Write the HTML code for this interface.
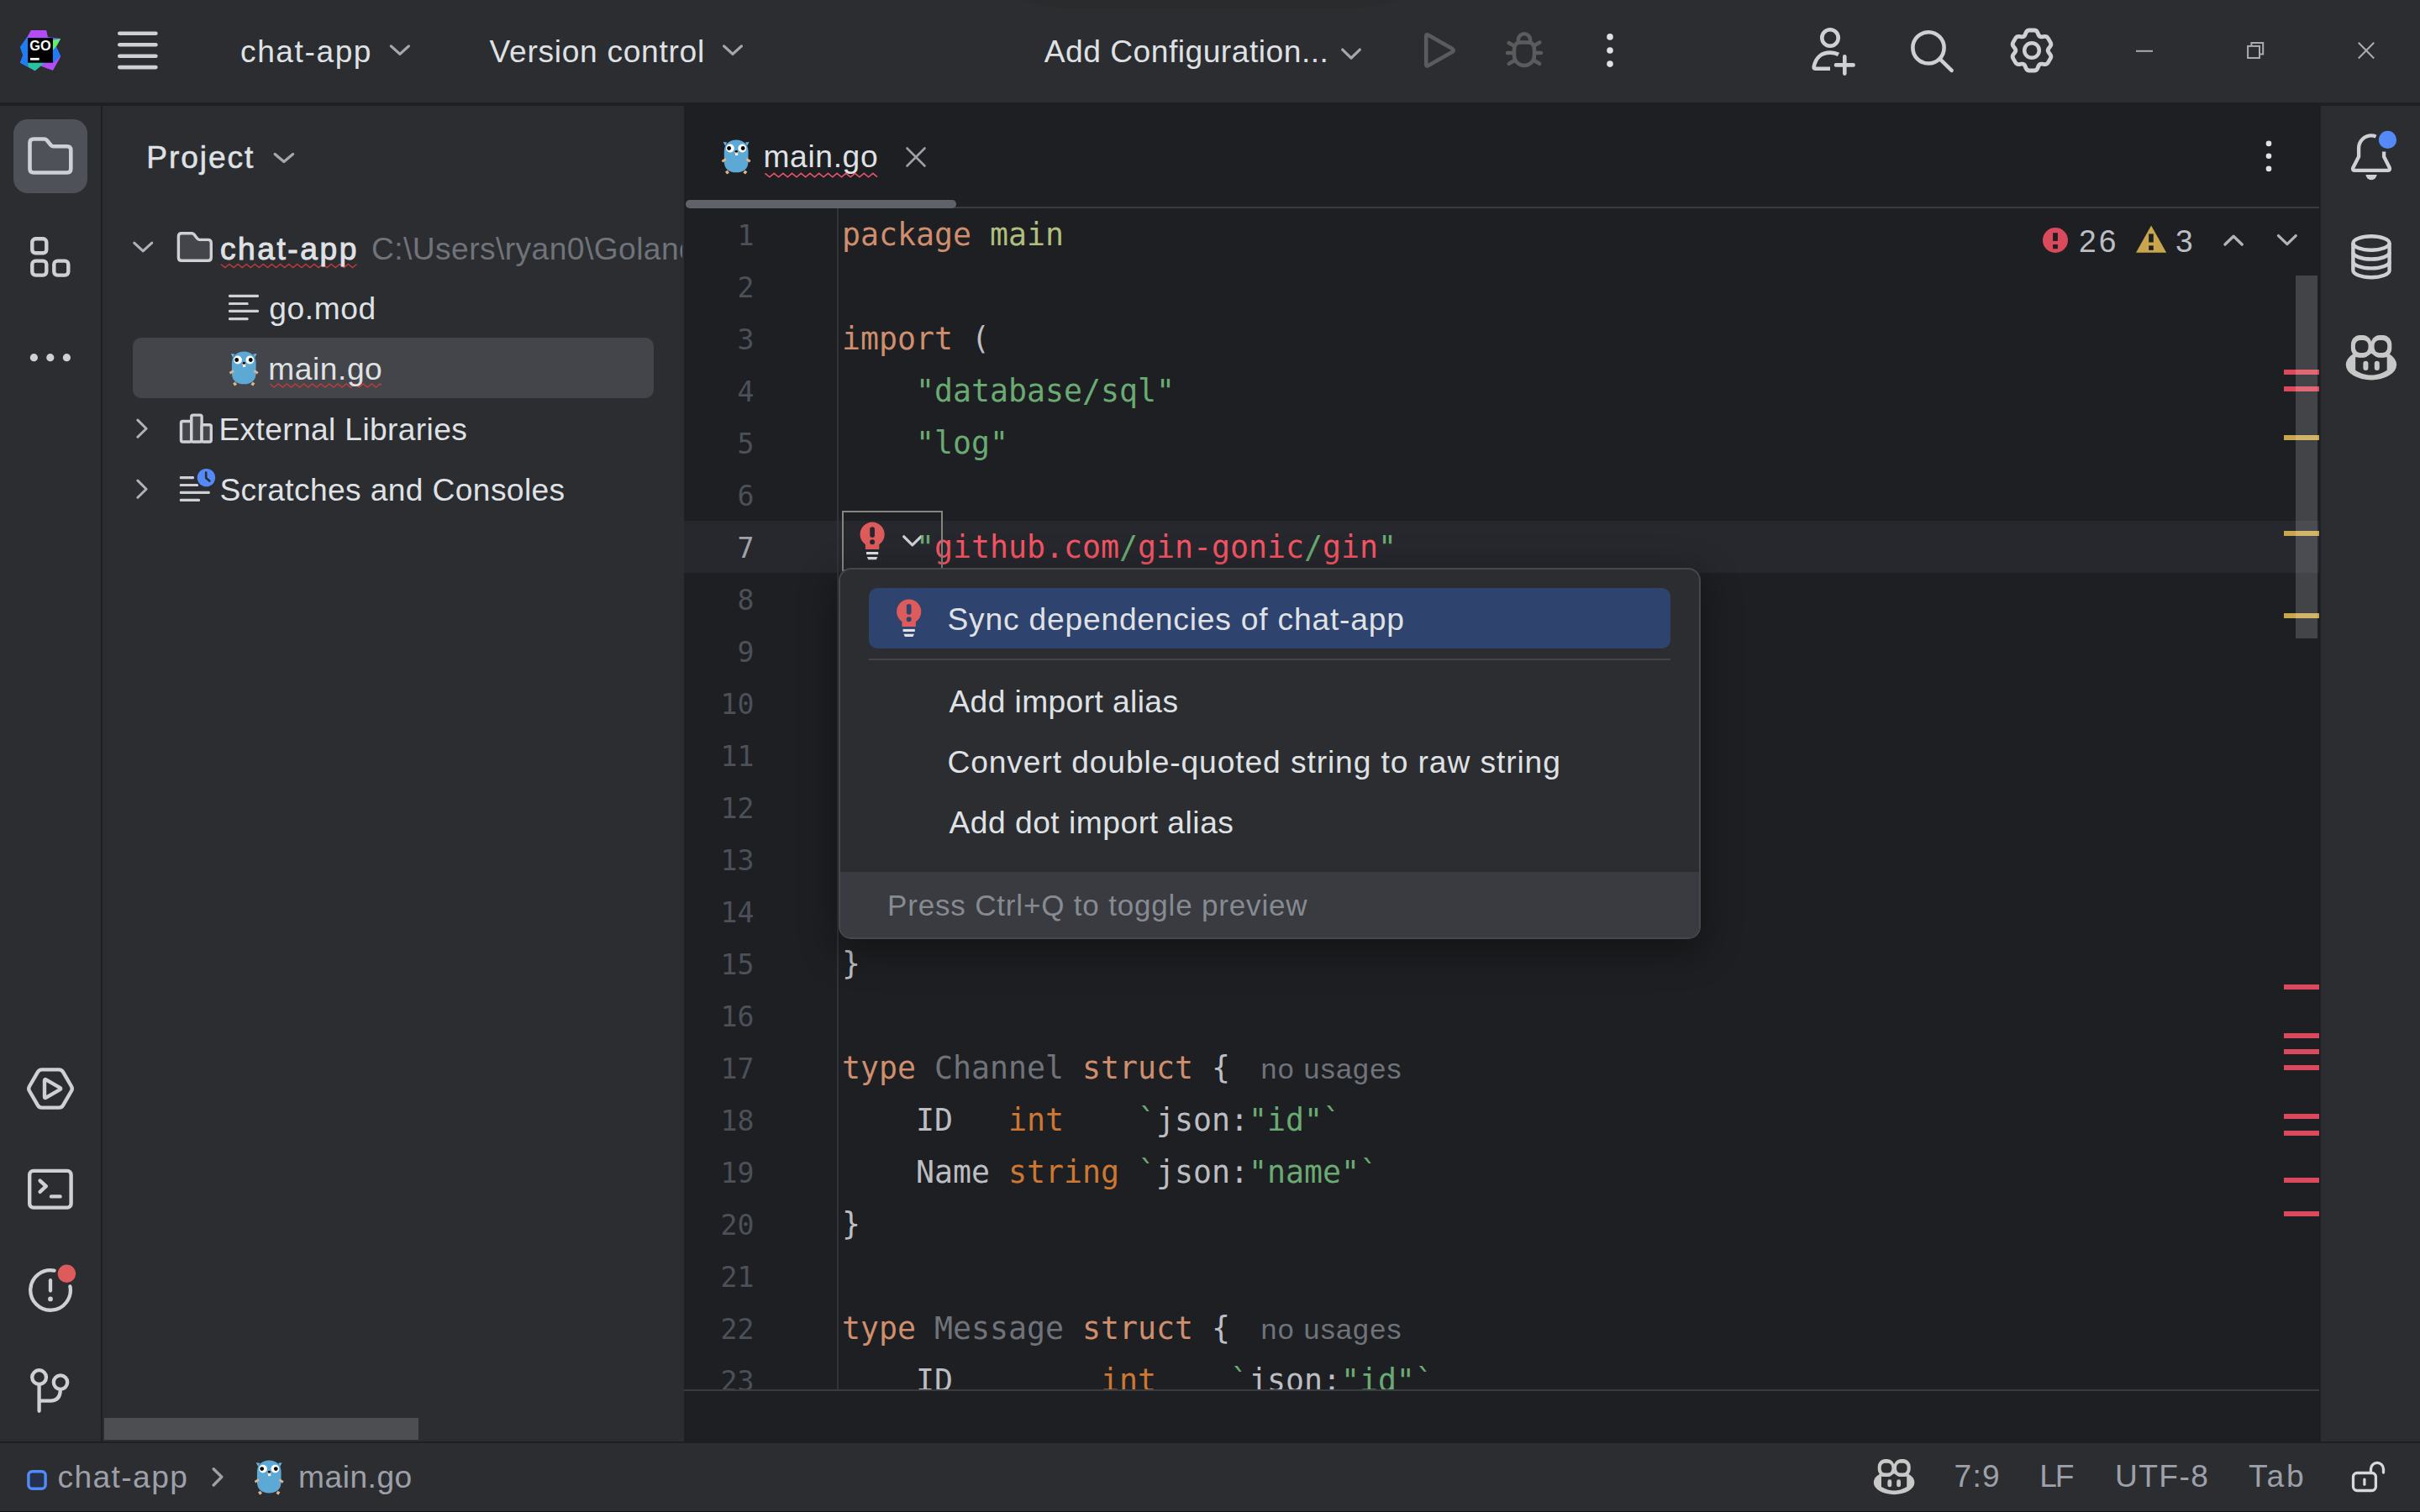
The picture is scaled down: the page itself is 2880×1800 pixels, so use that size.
<!DOCTYPE html>
<html lang="en"><head><meta charset="utf-8"><title>chat-app – main.go</title>
<style>
html,body{margin:0;padding:0;}
body{width:2880px;height:1800px;overflow:hidden;background:#1E1F22;position:relative;font-family:"Liberation Sans", "DejaVu Sans", sans-serif;}
div{box-sizing:border-box;}
.abs{position:absolute;}
#titlebar{position:absolute;left:0;top:0;width:2880px;height:122px;background:#2B2D30;}
#leftstrip{position:absolute;left:0;top:126px;width:120px;height:1590px;background:#2B2D30;}
#sidebar{position:absolute;left:122px;top:126px;width:692px;height:1590px;background:#2B2D30;}
#hscroll{position:absolute;left:124px;top:1688px;width:374px;height:26px;background:#4D4E52;}
#editor{position:absolute;left:814px;top:126px;width:1946px;height:1590px;background:#1E1F22;overflow:hidden;}
#rightstrip{position:absolute;left:2762px;top:126px;width:118px;height:1590px;background:#2B2D30;}
#statusbar{position:absolute;left:0;top:1718px;width:2880px;height:82px;background:#2B2D30;}
#bottomedge{position:absolute;left:0;top:1798.5px;width:2880px;height:1.5px;background:#0d0e0f;}
.t{position:absolute;white-space:nowrap;line-height:44px;font-family:"Liberation Sans", "DejaVu Sans", sans-serif;}
#tabline{position:absolute;left:1130px;top:246px;width:1630px;height:2px;background:#393B40;}
#tabul{position:absolute;left:816px;top:238.3px;width:322px;height:9.7px;background:#5F6269;border-radius:4.8px;}
#gutterline{position:absolute;left:996px;top:248px;width:2px;height:1406px;background:#313438;}
#botline{position:absolute;left:814px;top:1654px;width:1946px;height:2px;background:#393B40;}
#curline{position:absolute;left:814px;top:620px;width:1946px;height:62px;background:#26282E;}
#codeclip{position:absolute;left:814px;top:248px;width:1946px;height:1406px;overflow:hidden;}
.ln{position:absolute;left:0px;width:83.5px;text-align:right;font-family:"DejaVu Sans Mono", "Liberation Mono", monospace;font-size:33.2px;line-height:62px;height:62px;color:#4B5059;white-space:pre;padding-top:1.5px}
.ln.cur{color:#A1A3AB;}
.cl{position:absolute;left:188px;padding-top:1.4px;font-family:"DejaVu Sans Mono", "Liberation Mono", monospace;font-size:36.54px;line-height:62px;height:62px;color:#BCBEC4;white-space:pre;letter-spacing:0.0011px;}
.k{color:#CF8E6D;} .s{color:#6AAB73;} .g{color:#6F737A;} .o{color:#CC7832;} .r{color:#F75464;} .pk{color:#AFBF7E;}
#thumb{position:absolute;left:2732px;top:328px;width:26px;height:431.5px;background:rgba(255,255,255,0.17);}
.mk{position:absolute;left:2718px;width:42px;height:6px;}
#bulbbox{position:absolute;left:1002px;top:608px;width:120px;height:72px;border:2px solid #85867F;}
#popup{position:absolute;left:998px;top:676px;width:1026px;height:442px;background:#2B2D30;border:2px solid #46484D;border-radius:15px;box-shadow:0 12px 44px 6px rgba(0,0,0,0.33);overflow:hidden;}
#popsel{position:absolute;left:1034px;top:700px;width:954px;height:72px;background:#2E436E;border-radius:10px;}
#popsep{position:absolute;left:1034px;top:783.8px;width:954px;height:2px;background:#43454A;}
#popfoot{position:absolute;left:1000px;top:1037.5px;width:1022px;height:78.5px;background:#393B40;border-radius:0 0 13px 13px;}
svg.ov{position:absolute;left:0;top:0;width:2880px;height:1800px;overflow:visible;pointer-events:none;}
</style></head>
<body>
<div id="titlebar"><div style="position:absolute;left:1213px;top:-22px;width:454px;height:32px;border-radius:0 0 60px 60px / 0 0 16px 16px;background:rgba(0,0,0,0.045)"></div></div>
<div id="leftstrip"></div>
<div id="sidebar"></div>
<div id="hscroll"></div>
<div id="editor"></div>
<div id="curline"></div>
<div id="tabline"></div>
<div id="tabul"></div>
<div id="gutterline"></div>
<div id="botline"></div>
<div id="rightstrip"></div>
<div id="statusbar"></div>
<div id="bottomedge"></div>
<svg class="ov" viewBox="0 0 2880 1800">
<g transform="translate(12 24)">
<polygon points="25,12 43,12 44.7,19.9 60.2,22 54.9,31.5 60.2,43 50.9,59.7 36.6,54.6 29.6,60.2 12,50.5 15.3,41.7 12,31.9 20.4,19.9" fill="#7A5CF5"/>
<polygon points="25,12 43,12 45,21 20.4,21" fill="#B44CF5"/>
<polygon points="20.4,19.9 12,31.9 15.3,41.7 12,50.5 21,55 21,21" fill="#1E7CF5"/>
<polygon points="51,23.5 60.2,22 54.9,31.5 51,36" fill="#5CF06C"/>
<polygon points="51,36 54.9,31.5 60.2,43 51,51" fill="#1E7CF5"/>
<polygon points="51,51 60.2,43 50.9,59.7 36.6,54.6 42,50" fill="#B44CF5"/>
<polygon points="19,50 42,50 29.6,60.2 12,50.5" fill="#27C2A0"/>
<polygon points="12,50.5 17,43 21,50 22,56" fill="#1E7CF5"/>
<rect x="21.1" y="21.1" width="29.8" height="29.6" fill="#000"/>
<rect x="24" y="44.9" width="10.7" height="2.8" fill="#fff"/>
</g>
<rect x="140" y="37.4" width="47.7" height="4.6" rx="2.3" fill="#CED0D6"/>
<rect x="140" y="51.0" width="47.7" height="4.6" rx="2.3" fill="#CED0D6"/>
<rect x="140" y="64.4" width="47.7" height="4.6" rx="2.3" fill="#CED0D6"/>
<rect x="140" y="77.8" width="47.7" height="4.6" rx="2.3" fill="#CED0D6"/>
<path d="M465.4 54.9 L475.9 64.4 L486.4 54.9" fill="none" stroke="#A4A7AE" stroke-width="3.3" stroke-linecap="round" stroke-linejoin="round"/>
<path d="M861.6 54.9 L872.0 64.4 L882.4 54.9" fill="none" stroke="#A4A7AE" stroke-width="3.3" stroke-linecap="round" stroke-linejoin="round"/>
<path d="M1597.7 59.1 L1608.0 69.1 L1618.3 59.1" fill="none" stroke="#A4A7AE" stroke-width="3.3" stroke-linecap="round" stroke-linejoin="round"/>
<path d="M1697.2 43.2 L1697.2 76.6 Q1697.2 79.6 1699.9 78.1 L1728.4 61.8 Q1731 60 1728.4 58.1 L1699.9 41.8 Q1697.2 40.2 1697.2 43.2 Z" fill="none" stroke="#5A5B5D" stroke-width="4.6" stroke-linejoin="round"/>
<g fill="none" stroke="#5A5B5D" stroke-width="4.5" stroke-linecap="round">
<path d="M1802 60 Q1802 50.6 1809 50.6 H1819 Q1826 50.6 1826 60 V66 A12 12 0 0 1 1802 66 Z"/>
<path d="M1806.9 50 V47.3 A7.1 7.1 0 0 1 1821.1 47.3 V50"/>
<path d="M1802 54.6 L1795.6 51 M1826 54.2 L1832.4 50.5 M1800 62.9 H1794 M1828 62.9 H1834 M1802.3 72 L1795.8 75.9 M1825.7 72 L1832.2 75.9"/>
</g>
<circle cx="1916" cy="43.9" r="3.8" fill="#DFE1E5"/>
<circle cx="1916" cy="60" r="3.8" fill="#DFE1E5"/>
<circle cx="1916" cy="76.1" r="3.8" fill="#DFE1E5"/>
<g fill="none" stroke="#CED0D6" stroke-width="4.6" stroke-linecap="round">
<circle cx="2178" cy="45" r="9.7"/>
<path d="M2178 81.7 H2160.6 Q2158.4 81.7 2158.7 79.6 C2160.5 69 2167.5 62.6 2178 62.6 C2182 62.6 2185.4 63.5 2188 64.9" stroke-linecap="butt"/>
<path d="M2195.3 67.2 L2195.3 87.6 M2185 77.4 L2205.6 77.4"/>
</g>
<g fill="none" stroke="#CED0D6" stroke-width="4.6" stroke-linecap="round"><circle cx="2295" cy="56.9" r="18.6"/><path d="M2308.8 70.4 L2322.6 83.8"/></g>
<g fill="none" stroke="#CED0D6" stroke-width="4.8" stroke-linejoin="round"><path d="M2411.11 38.76 Q2412.23 35.98 2415.23 35.98 L2420.77 35.98 Q2423.77 35.98 2424.89 38.76 L2425.90 41.27 Q2427.10 44.24 2430.27 43.79 L2432.95 43.42 Q2435.92 43.00 2437.42 45.60 L2440.18 50.39 Q2441.68 52.98 2439.84 55.35 L2438.17 57.48 Q2436.20 60.00 2438.17 62.52 L2439.84 64.65 Q2441.68 67.02 2440.18 69.61 L2437.42 74.40 Q2435.92 77.00 2432.95 76.58 L2430.27 76.21 Q2427.10 75.76 2425.90 78.73 L2424.89 81.24 Q2423.77 84.02 2420.77 84.02 L2415.23 84.02 Q2412.23 84.02 2411.11 81.24 L2410.10 78.73 Q2408.90 75.76 2405.73 76.21 L2403.05 76.58 Q2400.08 77.00 2398.58 74.40 L2395.82 69.61 Q2394.32 67.02 2396.16 64.65 L2397.83 62.52 Q2399.80 60.00 2397.83 57.48 L2396.16 55.35 Q2394.32 52.98 2395.82 50.39 L2398.58 45.60 Q2400.08 43.00 2403.05 43.42 L2405.73 43.79 Q2408.90 44.24 2410.10 41.27 Z"/><circle cx="2418" cy="60" r="8.8" stroke-width="4.5"/></g>
<path d="M2542 60.8 H2562" stroke="#ABACB0" stroke-width="2" fill="none"/>
<g fill="none" stroke="#ABACB0" stroke-width="2"><rect x="2675.1" y="54.9" width="13.9" height="14.1"/><path d="M2679.4 54.9 V51.1 H2693.2 V64.4 H2689"/></g>
<path d="M2806.8 50.8 L2825.2 69.5 M2825.2 50.8 L2806.8 69.5" stroke="#ABACB0" stroke-width="2" fill="none"/>
<rect x="16" y="142" width="88" height="88" rx="17" fill="#4E5157"/>
<path d="M40 165.5 H52.5 Q54.5 165.5 55.8 167 L60.5 172.8 Q61.8 174.3 63.8 174.3 H80 Q84.3 174.3 84.3 178.6 V201 Q84.3 205.5 80 205.5 H40 Q35.5 205.5 35.5 201 V170 Q35.5 165.5 40 165.5 Z" fill="none" stroke="#CED0D6" stroke-width="4.6" stroke-linejoin="round"/>
<rect x="38.3" y="284.3" width="17" height="17" rx="4" fill="none" stroke="#CED0D6" stroke-width="4.4"/>
<rect x="38.3" y="310.6" width="17" height="17" rx="4" fill="none" stroke="#CED0D6" stroke-width="4.4"/>
<rect x="64.3" y="310.6" width="17" height="17" rx="4" fill="none" stroke="#CED0D6" stroke-width="4.4"/>
<circle cx="40.4" cy="425.7" r="4.6" fill="#CED0D6"/>
<circle cx="59.8" cy="425.7" r="4.6" fill="#CED0D6"/>
<circle cx="79.4" cy="425.7" r="4.6" fill="#CED0D6"/>
<g fill="none" stroke="#CED0D6" stroke-width="4.4" stroke-linejoin="round">
<path d="M44.99 1276.16 Q46.60 1273.40 49.80 1273.40 L70.20 1273.40 Q73.40 1273.40 75.01 1276.16 L84.99 1293.24 Q86.60 1296.00 84.99 1298.76 L75.01 1315.84 Q73.40 1318.60 70.20 1318.60 L49.80 1318.60 Q46.60 1318.60 44.99 1315.84 L35.01 1298.76 Q33.40 1296.00 35.01 1293.24 Z"/>
<path d="M53.00 1286.50 Q53.00 1284.30 54.90 1285.40 L71.30 1294.90 Q73.20 1296.00 71.30 1297.10 L54.90 1306.60 Q53.00 1307.70 53.00 1305.50 Z"/></g>
<g fill="none" stroke="#CED0D6" stroke-width="4.4" stroke-linecap="round" stroke-linejoin="round">
<rect x="35.2" y="1393.9" width="49.4" height="43.7" rx="4.5"/>
<path d="M47.6 1405.6 L54.8 1412.2 L47.6 1418.8 M61 1424.4 H71.6"/></g>
<g fill="none" stroke="#CED0D6" stroke-width="4.3" stroke-linecap="round">
<path d="M64.6 1512.6 A23.8 23.8 0 1 0 83.4 1531.4"/>
<path d="M60 1524.2 V1536.6"/></g><circle cx="60" cy="1546.4" r="2.9" fill="#CED0D6"/>
<circle cx="79.4" cy="1516.3" r="10.7" fill="#DE5B5B"/>
<g fill="none" stroke="#CED0D6" stroke-width="4.3" stroke-linecap="round">
<circle cx="46.6" cy="1639.6" r="8.4"/><circle cx="72" cy="1645.6" r="8.2"/>
<path d="M46.6 1648.3 V1679.8 M46.6 1667.6 H60 Q71.8 1667.6 71.8 1654.3"/></g>
<path d="M327.2 183.5 L337.9 192.6 L348.6 183.5" fill="none" stroke="#A4A7AE" stroke-width="3.3" stroke-linecap="round" stroke-linejoin="round"/>
<path d="M159.7 289.2 L170.2 298.9 L180.8 289.2" fill="none" stroke="#B0B3BA" stroke-width="3.0" stroke-linecap="round" stroke-linejoin="round"/>
<path d="M216 277.7 H228.3 Q229.8 277.7 230.8 278.9 L235 284.2 Q236 285.4 237.5 285.4 H247.5 Q251.3 285.4 251.3 289.2 V306.5 Q251.3 310.3 247.5 310.3 H216 Q212.4 310.3 212.4 306.5 V281.5 Q212.4 277.7 216 277.7 Z" fill="#43454A" stroke="#CED0D6" stroke-width="3.4" stroke-linejoin="round"/>
<polyline points="262.9,314.4 267.9,318.6 273.0,314.4 278.1,318.6 283.1,314.4 288.2,318.6 293.2,314.4 298.3,318.6 303.3,314.4 308.4,318.6 313.4,314.4 318.5,318.6 323.5,314.4 328.6,318.6 333.6,314.4 338.7,318.6 343.7,314.4 348.8,318.6 353.8,314.4 358.9,318.6 363.9,314.4 369.0,318.6 374.0,314.4 379.1,318.6 384.1,314.4 389.2,318.6 394.2,314.4 399.3,318.6 404.3,314.4 409.4,318.6 414.4,314.4 419.5,318.6 424.5,314.4" fill="none" stroke="#C03B3B" stroke-width="1.35" stroke-linejoin="miter"/>
<rect x="272" y="350.7" width="36.0" height="3.2" rx="1.2" fill="#CED0D6"/>
<rect x="272" y="359.9" width="23.6" height="3.2" rx="1.2" fill="#CED0D6"/>
<rect x="272" y="368.8" width="36.0" height="3.2" rx="1.2" fill="#CED0D6"/>
<rect x="272" y="378.0" width="23.6" height="3.2" rx="1.2" fill="#CED0D6"/>
<rect x="158" y="402" width="620" height="72" rx="10" fill="#43454A"/>
<g transform="translate(272.6 418.2) scale(1.0)">
<path d="M2.2 2.9 L6.6 3.4 L4.6 7.6 Z" fill="#6CB5E9"/><path d="M33 2.9 L28.6 3.4 L30.6 7.6 Z" fill="#6CB5E9"/>
<path d="M5.9 37.3 L8 40.4" stroke="#DDB58A" stroke-width="3.4"/>
<path d="M29.4 37.3 L27.3 40.4" stroke="#DDB58A" stroke-width="3.4"/>
<path d="M17.65 0.2 C26 0.2 32 5.6 32 14 L32 26 C32 34.5 26.5 39.1 17.65 39.1 C8.8 39.1 3.3 34.5 3.3 26 L3.3 14 C3.3 5.6 9.3 0.2 17.65 0.2 Z" fill="#5DA9D6"/>
<path d="M0.9 26 L5.4 23.2" stroke="#DDB58A" stroke-width="2.9" stroke-linecap="butt"/>
<path d="M34.3 26.1 L29.8 23.4" stroke="#DDB58A" stroke-width="2.9" stroke-linecap="butt"/>
<circle cx="10.4" cy="10.3" r="4.9" fill="#fff"/><circle cx="24.8" cy="10.3" r="4.9" fill="#fff"/>
<circle cx="9.1" cy="10.3" r="2.4" fill="#000"/><circle cx="25.7" cy="10.3" r="2.4" fill="#000"/>
<ellipse cx="17.8" cy="15.3" rx="2.6" ry="1.7" fill="#D9B08C"/>
<ellipse cx="17.8" cy="14" rx="1.6" ry="1.3" fill="#000"/>
<rect x="16.5" y="16.2" width="3.1" height="2.6" fill="#fff"/>
</g>
<polyline points="321.2,456.9 326.2,461.1 331.3,456.9 336.4,461.1 341.4,456.9 346.5,461.1 351.5,456.9 356.6,461.1 361.6,456.9 366.7,461.1 371.7,456.9 376.8,461.1 381.8,456.9 386.9,461.1 391.9,456.9 397.0,461.1 402.0,456.9 407.1,461.1 412.1,456.9 417.2,461.1 422.2,456.9 427.3,461.1 432.3,456.9 437.4,461.1 442.4,456.9 447.5,461.1 452.5,456.9 454.0,458.1" fill="none" stroke="#C03B3B" stroke-width="1.35" stroke-linejoin="miter"/>
<path d="M163.9 500.1 L174.1 510.2 L163.9 520.2" fill="none" stroke="#B0B3BA" stroke-width="3.0" stroke-linecap="round" stroke-linejoin="round"/>
<path d="M163.9 572.1 L174.1 582.2 L163.9 592.2" fill="none" stroke="#B0B3BA" stroke-width="3.0" stroke-linecap="round" stroke-linejoin="round"/>
<g fill="#43454A" stroke="#CED0D6" stroke-width="3.4" stroke-linejoin="round">
<rect x="215.5" y="501.5" width="12.3" height="24.5" rx="2"/>
<rect x="227.8" y="494.1" width="12.3" height="31.9" rx="2"/>
<rect x="240.1" y="505.8" width="11.2" height="20.2" rx="2"/></g>
<rect x="213.8" y="567.0" width="17.2" height="3.2" rx="1.2" fill="#CED0D6"/>
<rect x="213.8" y="575.9" width="22.2" height="3.2" rx="1.2" fill="#CED0D6"/>
<rect x="213.8" y="584.8" width="36.0" height="3.2" rx="1.2" fill="#CED0D6"/>
<rect x="213.8" y="593.8" width="24.2" height="3.2" rx="1.2" fill="#CED0D6"/>
<circle cx="245.5" cy="568.6" r="12.6" fill="#2B2D30"/><circle cx="245.5" cy="568.6" r="10.7" fill="#548AF7"/><path d="M245.2 562.5 V569 L249.3 572.6" fill="none" stroke="#2B2D30" stroke-width="2.6" stroke-linecap="round" stroke-linejoin="round"/>
<g transform="translate(858.5 166.2) scale(1.0)">
<path d="M2.2 2.9 L6.6 3.4 L4.6 7.6 Z" fill="#6CB5E9"/><path d="M33 2.9 L28.6 3.4 L30.6 7.6 Z" fill="#6CB5E9"/>
<path d="M5.9 37.3 L8 40.4" stroke="#DDB58A" stroke-width="3.4"/>
<path d="M29.4 37.3 L27.3 40.4" stroke="#DDB58A" stroke-width="3.4"/>
<path d="M17.65 0.2 C26 0.2 32 5.6 32 14 L32 26 C32 34.5 26.5 39.1 17.65 39.1 C8.8 39.1 3.3 34.5 3.3 26 L3.3 14 C3.3 5.6 9.3 0.2 17.65 0.2 Z" fill="#5DA9D6"/>
<path d="M0.9 26 L5.4 23.2" stroke="#DDB58A" stroke-width="2.9" stroke-linecap="butt"/>
<path d="M34.3 26.1 L29.8 23.4" stroke="#DDB58A" stroke-width="2.9" stroke-linecap="butt"/>
<circle cx="10.4" cy="10.3" r="4.9" fill="#fff"/><circle cx="24.8" cy="10.3" r="4.9" fill="#fff"/>
<circle cx="9.1" cy="10.3" r="2.4" fill="#000"/><circle cx="25.7" cy="10.3" r="2.4" fill="#000"/>
<ellipse cx="17.8" cy="15.3" rx="2.6" ry="1.7" fill="#D9B08C"/>
<ellipse cx="17.8" cy="14" rx="1.6" ry="1.3" fill="#000"/>
<rect x="16.5" y="16.2" width="3.1" height="2.6" fill="#fff"/>
</g>
<polyline points="910.5,206.3 915.9,210.8 921.2,206.3 926.6,210.8 931.9,206.3 937.3,210.8 942.6,206.3 948.0,210.8 953.3,206.3 958.7,210.8 964.0,206.3 969.4,210.8 974.7,206.3 980.1,210.8 985.4,206.3 990.8,210.8 996.1,206.3 1001.5,210.8 1006.8,206.3 1012.2,210.8 1017.5,206.3 1022.9,210.8 1028.2,206.3 1033.6,210.8 1038.9,206.3 1044.0,210.6" fill="none" stroke="#E5546A" stroke-width="1.6" stroke-linejoin="miter"/>
<path d="M1079.5 176.5 L1100.5 197.5 M1100.5 176.5 L1079.5 197.5" stroke="#9DA0A8" stroke-width="2.6" stroke-linecap="round" fill="none"/>
<circle cx="2700" cy="170.9" r="3.3" fill="#DFE1E5"/>
<circle cx="2700" cy="185.8" r="3.3" fill="#DFE1E5"/>
<circle cx="2700" cy="200.9" r="3.3" fill="#DFE1E5"/>
<circle cx="2446" cy="286" r="15" fill="#DB4A5C"/><rect x="2443.1" y="277.2" width="5.8" height="9.7" fill="#1E1F22"/><rect x="2443.1" y="291" width="5.8" height="5.2" fill="#1E1F22"/>
<path d="M2560.1 268.4 L2578.2 300.8 H2542 Z" fill="#C9A64D"/><rect x="2557.2" y="278.4" width="5.6" height="10.1" fill="#1E1F22"/><rect x="2557.2" y="292.4" width="5.6" height="5.4" fill="#1E1F22"/>
<path d="M2648.0 291.0 L2658.1 281.2 L2668.2 291.0" fill="none" stroke="#B0B3BA" stroke-width="3.4" stroke-linecap="round" stroke-linejoin="round"/>
<path d="M2711.5 280.6 L2721.9 290.6 L2732.2 280.6" fill="none" stroke="#B0B3BA" stroke-width="3.3" stroke-linecap="round" stroke-linejoin="round"/>
<g fill="none" stroke="#CED0D6" stroke-width="4.3" stroke-linejoin="round" stroke-linecap="butt">
<path d="M2827.6 162.6 C2825.9 161.8 2824 161.4 2822.1 161.4 A15 15 0 0 0 2807.1 176.4 V186.6 L2800.4 199.4 Q2799 202.9 2802.6 202.9 H2841.4 Q2845 202.9 2843.7 199.4 L2837.1 186.6 V180.5"/>
</g><path d="M2815.4 208 H2828.7 A6.7 7 0 0 1 2815.4 208 Z" fill="#CED0D6"/>
<circle cx="2841.5" cy="166.4" r="10.6" fill="#548AF7"/>
<g fill="none" stroke="#CED0D6" stroke-width="4.4">
<ellipse cx="2822" cy="289.5" rx="21.6" ry="8.2"/>
<path d="M2800.4 289.5 V322 A21.6 8.2 0 0 0 2843.6 322 V289.5"/>
<path d="M2800.4 300.3 A21.6 8.2 0 0 0 2843.6 300.3 M2800.4 311.2 A21.6 8.2 0 0 0 2843.6 311.2"/></g>
<g transform="translate(2782.0 385.0) scale(1.0 1.0)">
<ellipse cx="39.95" cy="49.2" rx="30.15" ry="18.2" fill="#C8C8C8"/>
<path d="M21.2 40.2 H33 L40 35.8 L47 40.2 H58.7 V55.8 C52 60 46 61.6 40 61.6 C34 61.6 28 60 21.2 55.8 Z" fill="#2B2D30"/>
<rect x="15.9" y="14" width="24.6" height="26.7" rx="10.5" ry="11.5" fill="#C8C8C8"/>
<rect x="39.5" y="14" width="24.8" height="26.7" rx="10.5" ry="11.5" fill="#C8C8C8"/>
<rect x="20.9" y="20.1" width="15.6" height="14.8" rx="6" fill="#2B2D30"/>
<rect x="43.6" y="20.1" width="15.6" height="14.8" rx="6" fill="#2B2D30"/>
<rect x="30.4" y="44.7" width="6" height="11.4" rx="3" fill="#C8C8C8"/>
<rect x="43.8" y="44.7" width="6" height="11.4" rx="3" fill="#C8C8C8"/>
</g>
<g transform="translate(1038.1 636.1)">
<path d="M-8.2 17.9 L-8.2 12.2 A14.6 14.6 0 1 1 8.2 12.2 L8.2 17.9 Z" fill="#DE5B5B"/>
<rect x="-2.85" y="-8.9" width="5.7" height="12.6" rx="2.85" fill="#26282E"/>
<circle cx="0" cy="9.2" r="3" fill="#26282E"/>
<rect x="-7.1" y="20.9" width="14.2" height="3.1" fill="#DFE1E5"/>
<path d="M-6.2 26.8 H6.2 L4.8 30.1 H-4.8 Z" fill="#DFE1E5"/>
</g>
<path d="M1075.7 638.8 L1085.8 648.8 L1096.0 638.8" fill="none" stroke="#CED0D6" stroke-width="3.2" stroke-linecap="round" stroke-linejoin="round"/>
<rect x="33.9" y="1751.7" width="20.2" height="20.6" rx="4.5" fill="#25324D" stroke="#548AF7" stroke-width="3.4"/>
<path d="M254.2 1748.7 L263.8 1758.3 L254.2 1768.0" fill="none" stroke="#9DA0A8" stroke-width="3.4" stroke-linecap="round" stroke-linejoin="round"/>
<g transform="translate(302.6 1738.3) scale(1.0)">
<path d="M2.2 2.9 L6.6 3.4 L4.6 7.6 Z" fill="#6CB5E9"/><path d="M33 2.9 L28.6 3.4 L30.6 7.6 Z" fill="#6CB5E9"/>
<path d="M5.9 37.3 L8 40.4" stroke="#DDB58A" stroke-width="3.4"/>
<path d="M29.4 37.3 L27.3 40.4" stroke="#DDB58A" stroke-width="3.4"/>
<path d="M17.65 0.2 C26 0.2 32 5.6 32 14 L32 26 C32 34.5 26.5 39.1 17.65 39.1 C8.8 39.1 3.3 34.5 3.3 26 L3.3 14 C3.3 5.6 9.3 0.2 17.65 0.2 Z" fill="#5DA9D6"/>
<path d="M0.9 26 L5.4 23.2" stroke="#DDB58A" stroke-width="2.9" stroke-linecap="butt"/>
<path d="M34.3 26.1 L29.8 23.4" stroke="#DDB58A" stroke-width="2.9" stroke-linecap="butt"/>
<circle cx="10.4" cy="10.3" r="4.9" fill="#fff"/><circle cx="24.8" cy="10.3" r="4.9" fill="#fff"/>
<circle cx="9.1" cy="10.3" r="2.4" fill="#000"/><circle cx="25.7" cy="10.3" r="2.4" fill="#000"/>
<ellipse cx="17.8" cy="15.3" rx="2.6" ry="1.7" fill="#D9B08C"/>
<ellipse cx="17.8" cy="14" rx="1.6" ry="1.3" fill="#000"/>
<rect x="16.5" y="16.2" width="3.1" height="2.6" fill="#fff"/>
</g>
<g transform="translate(2221.9 1726.0) scale(0.806 0.789)">
<ellipse cx="39.95" cy="49.2" rx="30.15" ry="18.2" fill="#C8C8C8"/>
<path d="M21.2 40.2 H33 L40 35.8 L47 40.2 H58.7 V55.8 C52 60 46 61.6 40 61.6 C34 61.6 28 60 21.2 55.8 Z" fill="#2B2D30"/>
<rect x="15.9" y="14" width="24.6" height="26.7" rx="10.5" ry="11.5" fill="#C8C8C8"/>
<rect x="39.5" y="14" width="24.8" height="26.7" rx="10.5" ry="11.5" fill="#C8C8C8"/>
<rect x="20.9" y="20.1" width="15.6" height="14.8" rx="6" fill="#2B2D30"/>
<rect x="43.6" y="20.1" width="15.6" height="14.8" rx="6" fill="#2B2D30"/>
<rect x="30.4" y="44.7" width="6" height="11.4" rx="3" fill="#C8C8C8"/>
<rect x="43.8" y="44.7" width="6" height="11.4" rx="3" fill="#C8C8C8"/>
</g>
<g fill="none" stroke="#D6D8DE" stroke-width="3.3" stroke-linecap="round">
<rect x="2800.5" y="1753.5" width="26.9" height="21" rx="4.7"/>
<path d="M2821.5 1753 V1748.9 A7.5 7.5 0 0 1 2836.5 1748.9 V1753.1"/>
<path d="M2813.9 1761.2 V1767.2" stroke-width="3.2"/></g>
<text x="47.9" y="60.2" font-family='"Liberation Sans", "DejaVu Sans", sans-serif' font-weight="700" font-size="16.8" fill="#fff" text-anchor="middle" textLength="25.4" lengthAdjust="spacingAndGlyphs">GO</text>
</svg>
<div id="codeclip">
<div class="ln" style="top:0px">1</div>
<div class="ln" style="top:62px">2</div>
<div class="ln" style="top:124px">3</div>
<div class="ln" style="top:186px">4</div>
<div class="ln" style="top:248px">5</div>
<div class="ln" style="top:310px">6</div>
<div class="ln cur" style="top:372px">7</div>
<div class="ln" style="top:434px">8</div>
<div class="ln" style="top:496px">9</div>
<div class="ln" style="top:558px">10</div>
<div class="ln" style="top:620px">11</div>
<div class="ln" style="top:682px">12</div>
<div class="ln" style="top:744px">13</div>
<div class="ln" style="top:806px">14</div>
<div class="ln" style="top:868px">15</div>
<div class="ln" style="top:930px">16</div>
<div class="ln" style="top:992px">17</div>
<div class="ln" style="top:1054px">18</div>
<div class="ln" style="top:1116px">19</div>
<div class="ln" style="top:1178px">20</div>
<div class="ln" style="top:1240px">21</div>
<div class="ln" style="top:1302px">22</div>
<div class="ln" style="top:1364px">23</div>
<div class="cl" style="top:0px"><span class="k">package</span> <span class="pk">main</span></div>
<div class="cl" style="top:124px"><span class="k">import</span> (</div>
<div class="cl" style="top:186px">    <span class="s">&quot;database/sql&quot;</span></div>
<div class="cl" style="top:248px">    <span class="s">&quot;log&quot;</span></div>
<div class="cl" style="top:372px">    <span class="s">&quot;</span><span class="r">github.com</span><span class="s">/</span><span class="r">gin-gonic</span><span class="s">/</span><span class="r">gin</span><span class="s">&quot;</span></div>
<div class="cl" style="top:868px">}</div>
<div class="cl" style="top:992px"><span class="k">type</span> <span class="g">Channel</span> <span class="k">struct</span> {</div>
<div class="cl" style="top:1054px">    ID   <span class="o">int</span>    <span class="s">`</span>json:<span class="s">&quot;id&quot;</span><span class="s">`</span></div>
<div class="cl" style="top:1116px">    Name <span class="o">string</span> <span class="s">`</span>json:<span class="s">&quot;name&quot;</span><span class="s">`</span></div>
<div class="cl" style="top:1178px">}</div>
<div class="cl" style="top:1302px"><span class="k">type</span> <span class="g">Message</span> <span class="k">struct</span> {</div>
<div class="cl" style="top:1364px">    ID        <span class="o">int</span>    <span class="s">`</span>json:<span class="s">&quot;id&quot;</span><span class="s">`</span></div>
</div>
<div class="mk" style="top:439.8px;background:#DB4A5C"></div>
<div class="mk" style="top:459.6px;background:#DB4A5C"></div>
<div class="mk" style="top:517.8px;background:#C9A64D"></div>
<div class="mk" style="top:631.5px;background:#C9A64D"></div>
<div class="mk" style="top:729.7px;background:#C9A64D"></div>
<div class="mk" style="top:1172.0px;background:#DB4A5C"></div>
<div class="mk" style="top:1229.9px;background:#DB4A5C"></div>
<div class="mk" style="top:1248.5px;background:#DB4A5C"></div>
<div class="mk" style="top:1267.9px;background:#DB4A5C"></div>
<div class="mk" style="top:1325.8px;background:#DB4A5C"></div>
<div class="mk" style="top:1346.0px;background:#DB4A5C"></div>
<div class="mk" style="top:1401.8px;background:#DB4A5C"></div>
<div class="mk" style="top:1441.9px;background:#DB4A5C"></div>
<div id="thumb"></div>
<div class="t" style="left:286.00px;top:39.01px;font-size:37.2px;letter-spacing:1.546px;color:#DFE1E5;font-weight:400;">chat-app</div>
<div class="t" style="left:582.60px;top:39.01px;font-size:37.2px;letter-spacing:0.687px;color:#DFE1E5;font-weight:400;">Version control</div>
<div class="t" style="left:1242.70px;top:39.11px;font-size:37.2px;letter-spacing:0.501px;color:#DFE1E5;font-weight:400;">Add Configuration...</div>
<div class="t" style="left:174.30px;top:164.71px;font-size:37.2px;letter-spacing:1.884px;color:#DFE1E5;font-weight:400;-webkit-text-stroke:0.55px currentColor;paint-order:stroke fill;">Project</div>
<div class="t" style="left:261.90px;top:273.91px;font-size:37.2px;letter-spacing:2.546px;color:#DFE1E5;font-weight:400;-webkit-text-stroke:1.0px currentColor;paint-order:stroke fill;">chat-app</div>
<div class="t" style="left:442.00px;top:273.91px;font-size:37.2px;letter-spacing:0.425px;color:#6F737A;font-weight:400;width:370px;overflow:hidden;">C:\Users\ryan0\Goland</div>
<div class="t" style="left:320.20px;top:344.71px;font-size:37.2px;letter-spacing:0.600px;color:#DFE1E5;font-weight:400;">go.mod</div>
<div class="t" style="left:319.20px;top:417.11px;font-size:37.2px;letter-spacing:0.551px;color:#DFE1E5;font-weight:400;">main.go</div>
<div class="t" style="left:260.40px;top:488.61px;font-size:37.2px;letter-spacing:0.358px;color:#DFE1E5;font-weight:400;">External Libraries</div>
<div class="t" style="left:261.40px;top:560.51px;font-size:37.2px;letter-spacing:0.366px;color:#DFE1E5;font-weight:400;">Scratches and Consoles</div>
<div class="t" style="left:908.50px;top:164.11px;font-size:37.2px;letter-spacing:0.632px;color:#DFE1E5;font-weight:400;">main.go</div>
<div class="t" style="left:2474.00px;top:265.11px;font-size:37.2px;letter-spacing:3.100px;color:#BCBEC4;font-weight:400;">26</div>
<div class="t" style="left:2589.00px;top:265.11px;font-size:37.2px;letter-spacing:9.000px;color:#BCBEC4;font-weight:400;">3</div>
<div class="t" style="left:68.40px;top:1736.11px;font-size:37.2px;letter-spacing:1.412px;color:#9DA0A8;font-weight:400;">chat-app</div>
<div class="t" style="left:355.00px;top:1736.11px;font-size:37.2px;letter-spacing:0.500px;color:#9DA0A8;font-weight:400;">main.go</div>
<div class="t" style="left:2325.50px;top:1735.31px;font-size:37.2px;letter-spacing:1.200px;color:#9DA0A8;font-weight:400;">7:9</div>
<div class="t" style="left:2427.20px;top:1735.31px;font-size:37.2px;letter-spacing:-2.000px;color:#9DA0A8;font-weight:400;">LF</div>
<div class="t" style="left:2516.90px;top:1735.31px;font-size:37.2px;letter-spacing:1.400px;color:#9DA0A8;font-weight:400;">UTF-8</div>
<div class="t" style="left:2676.00px;top:1735.31px;font-size:37.2px;letter-spacing:2.850px;color:#9DA0A8;font-weight:400;">Tab</div>
<div class="t" style="left:1500.50px;top:1249.92px;font-size:34px;letter-spacing:1.250px;color:#6F737A;font-weight:400;">no usages</div>
<div class="t" style="left:1500.50px;top:1559.92px;font-size:34px;letter-spacing:1.250px;color:#6F737A;font-weight:400;">no usages</div>
<div id="bulbbox"></div>
<div id="popup"></div>
<div id="popsel"></div>
<div id="popsep"></div>
<div id="popfoot"></div>
<svg class="ov" viewBox="0 0 2880 1800"><g transform="translate(998 677)">
<g transform="translate(83.7 51.0)">
<path d="M-8.2 17.9 L-8.2 12.2 A14.6 14.6 0 1 1 8.2 12.2 L8.2 17.9 Z" fill="#DE5B5B"/>
<rect x="-2.85" y="-8.9" width="5.7" height="12.6" rx="2.85" fill="#2E436E"/>
<circle cx="0" cy="9.2" r="3" fill="#2E436E"/>
<rect x="-7.1" y="20.9" width="14.2" height="3.1" fill="#DFE1E5"/>
<path d="M-6.2 26.8 H6.2 L4.8 30.1 H-4.8 Z" fill="#DFE1E5"/>
</g>
</g></svg>
<div class="t" style="left:1127.40px;top:715.11px;font-size:37.2px;letter-spacing:0.807px;color:#DFE1E5;font-weight:400;">Sync dependencies of chat-app</div>
<div class="t" style="left:1129.40px;top:813.11px;font-size:37.2px;letter-spacing:0.400px;color:#DFE1E5;font-weight:400;">Add import alias</div>
<div class="t" style="left:1127.40px;top:885.11px;font-size:37.2px;letter-spacing:0.902px;color:#DFE1E5;font-weight:400;">Convert double-quoted string to raw string</div>
<div class="t" style="left:1129.40px;top:957.11px;font-size:37.2px;letter-spacing:0.520px;color:#DFE1E5;font-weight:400;">Add dot import alias</div>
<div class="t" style="left:1056.00px;top:1055.87px;font-size:35px;letter-spacing:0.828px;color:#868A91;font-weight:400;">Press Ctrl+Q to toggle preview</div>
</body></html>
